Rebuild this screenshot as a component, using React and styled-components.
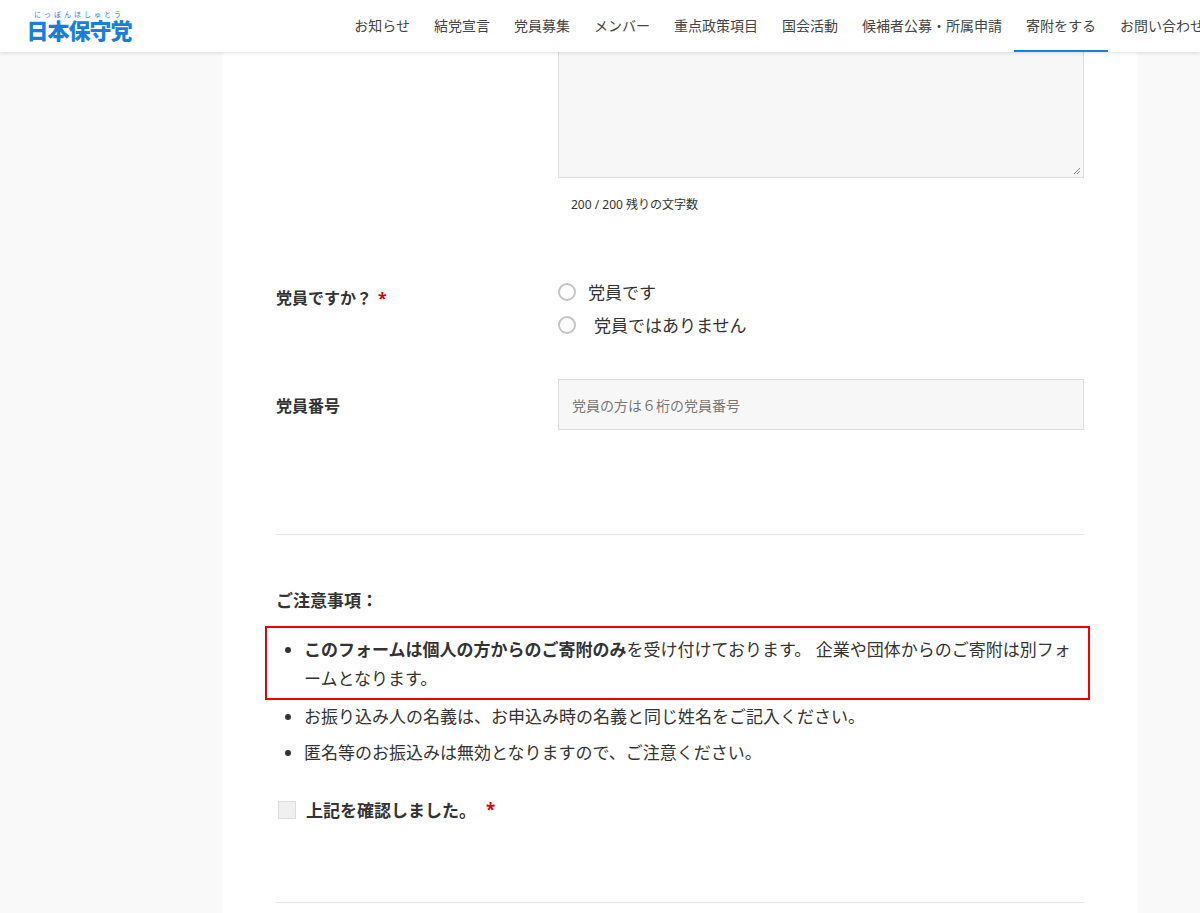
import React from 'react';
import styled, { createGlobalStyle } from 'styled-components';

const Global = createGlobalStyle`
  body { margin: 0; background: #f9f9f9; font-family: "Noto Sans", "Noto Sans CJK JP", sans-serif; color: #333; overflow: hidden; }
`;

const Header = styled.header`
  height: 52px; background: #fff; box-shadow: 0 1px 4px rgba(0,0,0,0.12);
  display: flex; align-items: center; position: relative; z-index: 2; overflow: hidden; white-space: nowrap;
`;
const Logo = styled.div`
  margin-left: 27px; display: flex; flex-direction: column; align-items: center; width: 104px; color: #1a7fd8; flex-shrink: 0;
`;
const Ruby = styled.span` font-size: 7px; letter-spacing: 3px; line-height: 8px; white-space: nowrap; `;
const LogoText = styled.span` font-size: 22px; font-weight: 900; line-height: 22px; letter-spacing: -1px; `;
const Nav = styled.nav` display: flex; margin-left: auto; margin-right: -16px; height: 52px; flex-shrink: 0; `;
const NavItem = styled.a`
  display: flex; align-items: center; padding: 0 12px; font-size: 14px; color: #444;
  border-bottom: 2px solid ${p => p.$active ? '#1a7fd8' : 'transparent'}; box-sizing: border-box;
`;

const Panel = styled.main`
  width: 916px; margin-left: 222px; background: #fff; height: 861px; padding: 0 54px; box-sizing: border-box;
`;
const Row = styled.div` display: grid; grid-template-columns: 282px 526px; `;
const Label = styled.div` font-size: 16px; font-weight: 700; color: #333; `;
const Req = styled.span` color: #d00; margin-left: 6px; `;
const TextArea = styled.div`
  height: 126px; background: #f7f7f7; border: 1px solid #ddd; border-top: none; box-sizing: border-box; position: relative;
`;
const Grip = styled.svg` position: absolute; right: 2px; bottom: 2px; `;
const Counter = styled.div` font-size: 12px; color: #333; margin: 17px 0 0 13px; `;
const Radios = styled.div` display: flex; flex-direction: column; gap: 8px; `;
const RadioLabel = styled.label` display: flex; align-items: center; font-size: 17px; color: #333; gap: ${p => p.$gap}px; `;
const Circle = styled.span` width: 18px; height: 18px; border: 2px solid #c4c4c4; border-radius: 50%; box-sizing: border-box; `;
const Input = styled.div`
  height: 51px; background: #f7f7f7; border: 1px solid #ddd; box-sizing: border-box;
  display: flex; align-items: center; padding-left: 13px; font-size: 14px; color: #777;
`;
const Hr = styled.hr` border: none; border-top: 1px solid #e8e8e8; margin: 0; `;
const NoteTitle = styled.div` font-size: 17px; font-weight: 700; margin: 52px 0 14px; `;
const List = styled.ul` margin: 0; padding: 0 0 0 28px; font-size: 17px; line-height: 29px; `;
const Item = styled.li` margin-bottom: 7px; `;
const Highlight = styled.div`
  border: 2px solid #e00; margin: 0 -6px 0 -39px; padding: 7px 10px 5px 37px;
`;
const Check = styled.label` display: flex; align-items: center; gap: 10px; font-size: 17px; font-weight: 700; margin: 30px 0 0 2px; `;
const Box = styled.span` width: 18px; height: 18px; background: #f0f0f0; border: 1px solid #ddd; box-sizing: border-box; `;

const navs = ['お知らせ','結党宣言','党員募集','メンバー','重点政策項目','国会活動','候補者公募・所属申請','寄附をする','お問い合わせ'];

export default function App() {
  return (
    <>
      <Global />
      <Header>
        <Logo><Ruby>にっぽんほしゅとう</Ruby><LogoText>日本保守党</LogoText></Logo>
        <Nav>{navs.map(n => <NavItem key={n} $active={n === '寄附をする'}>{n}</NavItem>)}</Nav>
      </Header>
      <Panel>
        <Row>
          <div />
          <div>
            <TextArea>
              <Grip width="8" height="8" viewBox="0 0 8 8"><path d="M7 1L1 7M7 4L4 7" stroke="#888" strokeWidth="1" /></Grip>
            </TextArea>
            <Counter>200 / 200 残りの文字数</Counter>
          </div>
        </Row>
        <Row style={{ marginTop: 66 }}>
          <Label style={{ paddingTop: 6 }}>党員ですか？<Req>*</Req></Label>
          <Radios>
            <RadioLabel $gap={12}><Circle />党員です</RadioLabel>
            <RadioLabel $gap={18}><Circle />党員ではありません</RadioLabel>
          </Radios>
        </Row>
        <Row style={{ marginTop: 42, alignItems: 'center', marginBottom: 104 }}>
          <Label>党員番号</Label>
          <Input>党員の方は６桁の党員番号</Input>
        </Row>
        <Hr />
        <NoteTitle>ご注意事項：</NoteTitle>
        <List>
          <Highlight>
            <li><b>このフォームは個人の方からのご寄附のみ</b>を受け付けております。 企業や団体からのご寄附は別フォームとなります。</li>
          </Highlight>
          <Item style={{ marginTop: 2 }}>お振り込み人の名義は、お申込み時の名義と同じ姓名をご記入ください。</Item>
          <Item>匿名等のお振込みは無効となりますので、ご注意ください。</Item>
        </List>
        <Check><Box />上記を確認しました。<Req style={{ marginLeft: 0 }}>*</Req></Check>
        <Hr style={{ marginTop: 80 }} />
      </Panel>
    </>
  );
}
